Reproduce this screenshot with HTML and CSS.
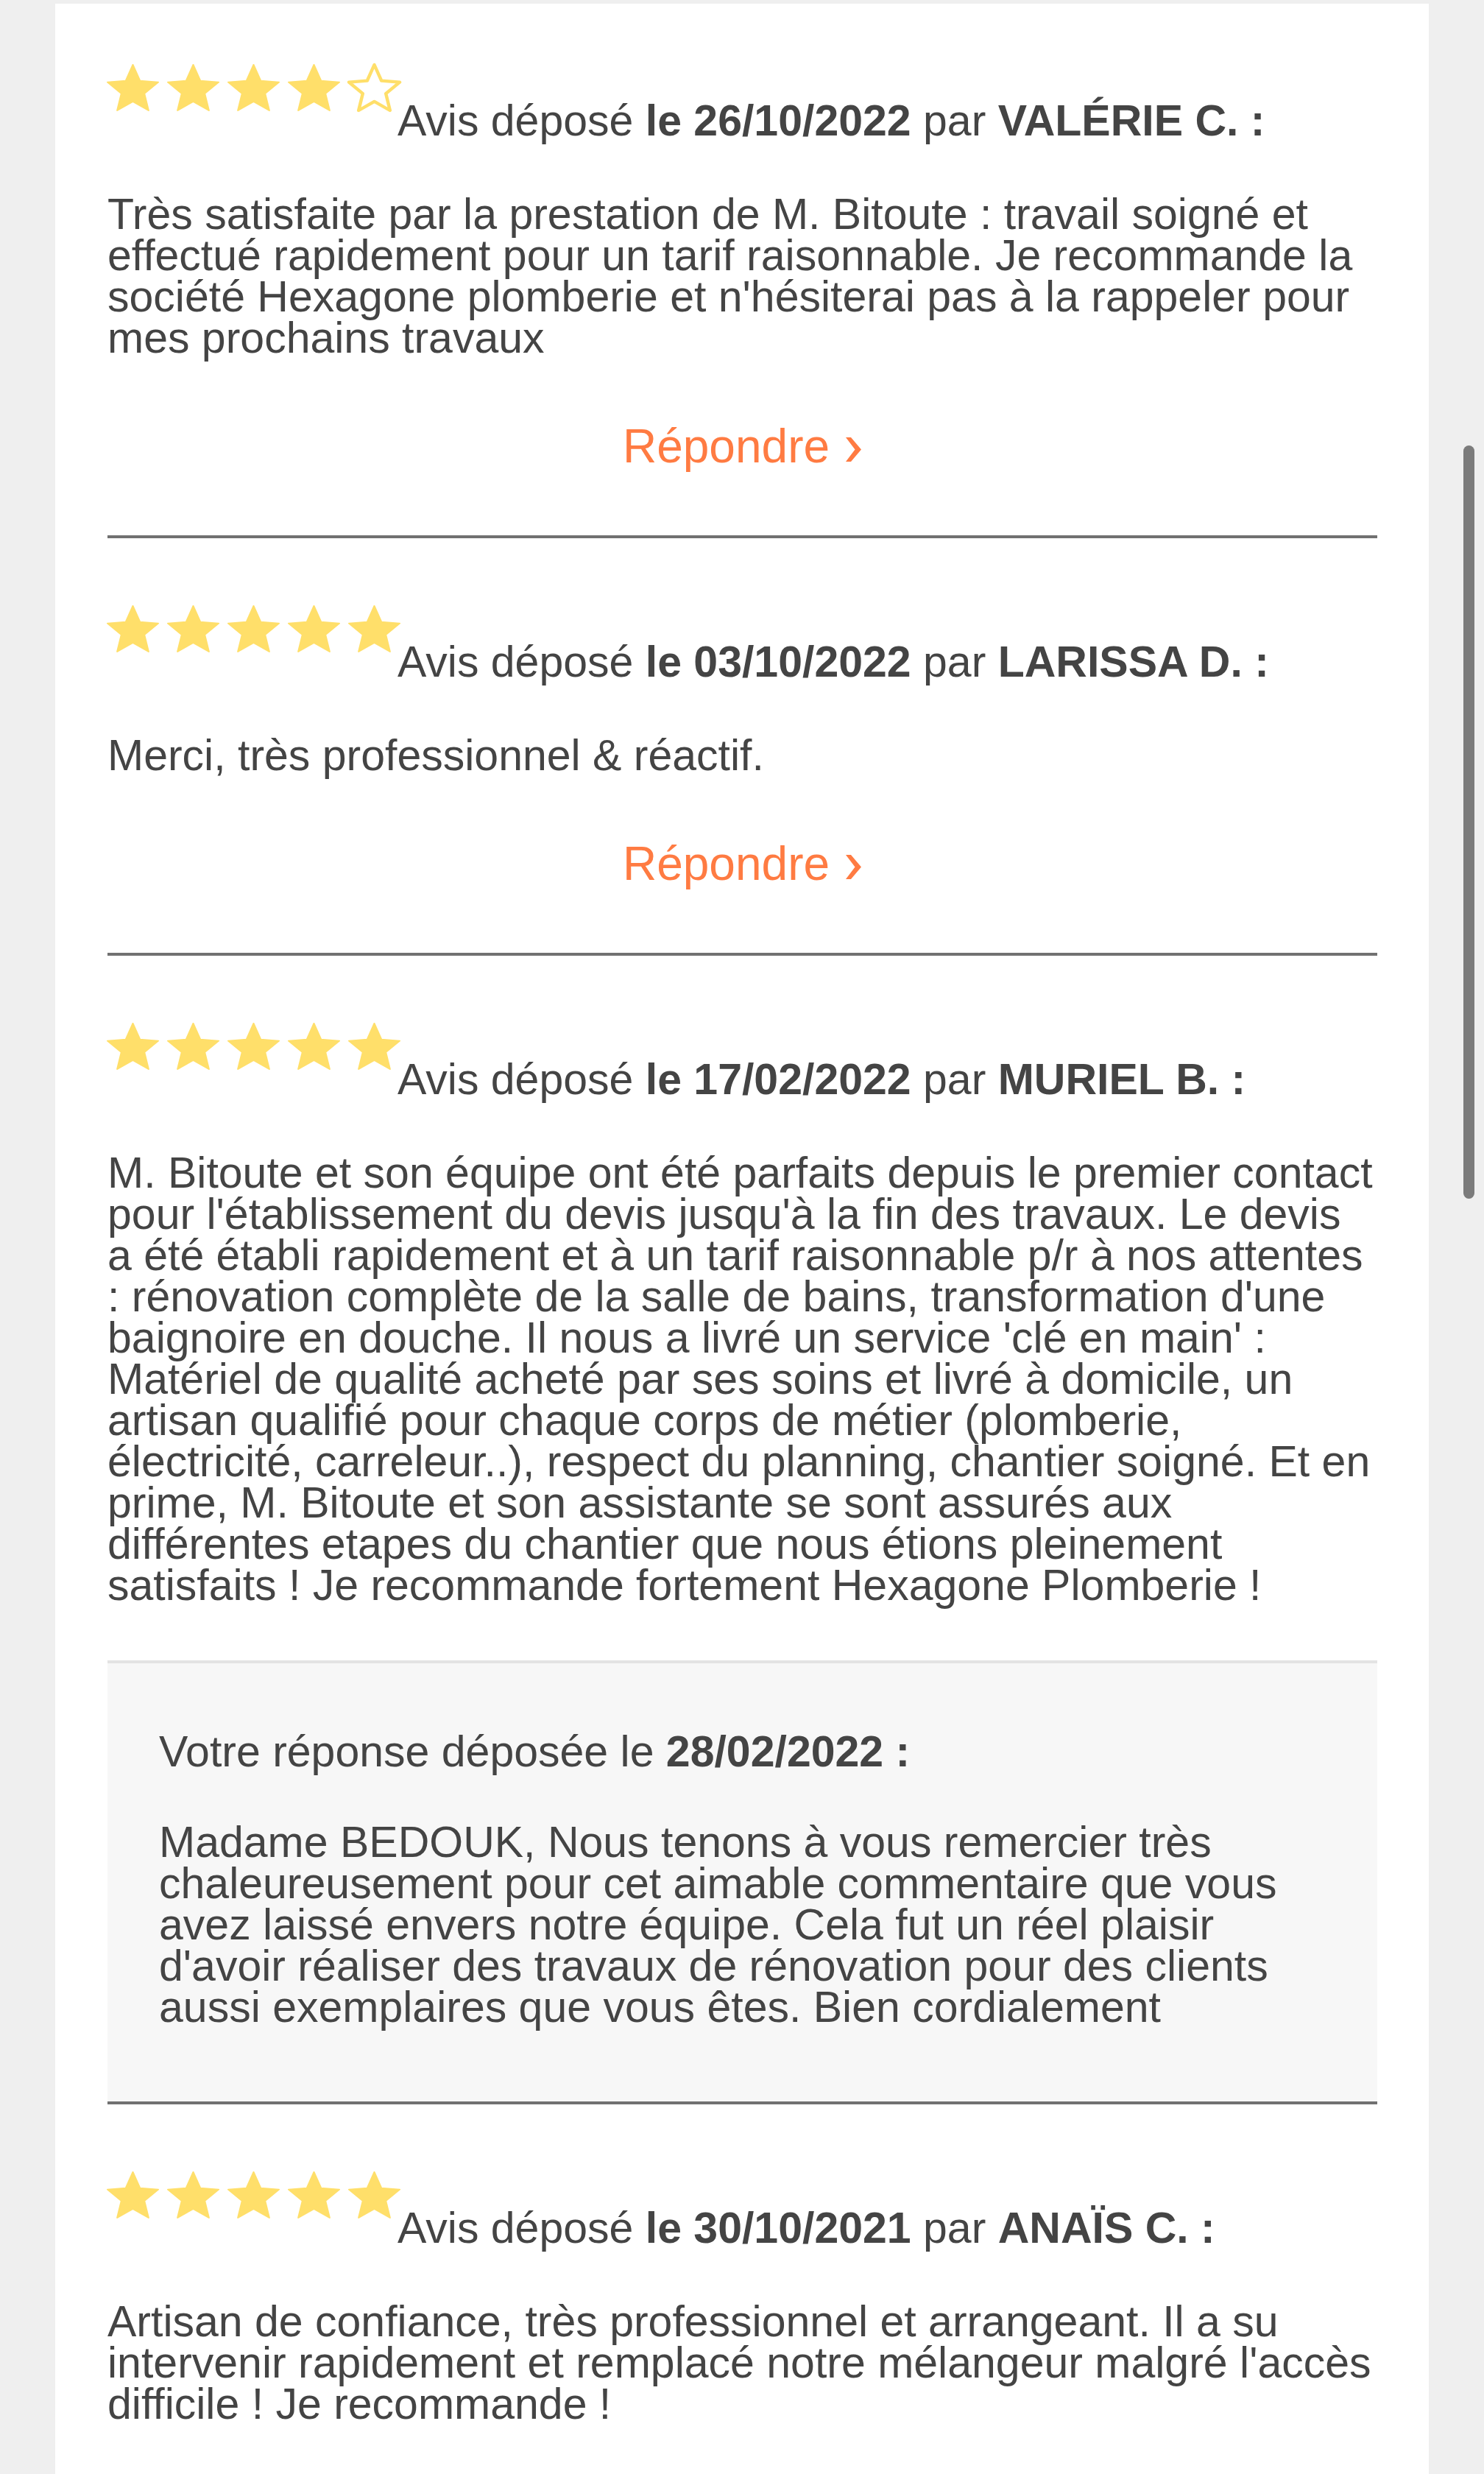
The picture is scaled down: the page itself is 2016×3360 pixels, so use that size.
FILE: index.html
```html
<!DOCTYPE html>
<html lang="fr">
<head>
<meta charset="utf-8">
<title>Avis clients – Hexagone Plomberie</title>
<link rel="stylesheet" href="styles.css">
</head>
<body>
<main class="page">

  <article class="review">
    <header class="review-head">
      <span class="stars">
        <svg class="star" viewBox="2 2 20 19" preserveAspectRatio="none"><path d="M12 17.27L18.18 21l-1.64-7.03L22 9.24l-7.19-.61L12 2 9.19 8.63 2 9.24l5.46 4.73L5.82 21z"/></svg>
        <svg class="star" viewBox="2 2 20 19" preserveAspectRatio="none"><path d="M12 17.27L18.18 21l-1.64-7.03L22 9.24l-7.19-.61L12 2 9.19 8.63 2 9.24l5.46 4.73L5.82 21z"/></svg>
        <svg class="star" viewBox="2 2 20 19" preserveAspectRatio="none"><path d="M12 17.27L18.18 21l-1.64-7.03L22 9.24l-7.19-.61L12 2 9.19 8.63 2 9.24l5.46 4.73L5.82 21z"/></svg>
        <svg class="star" viewBox="2 2 20 19" preserveAspectRatio="none"><path d="M12 17.27L18.18 21l-1.64-7.03L22 9.24l-7.19-.61L12 2 9.19 8.63 2 9.24l5.46 4.73L5.82 21z"/></svg>
        <svg class="star star-empty" viewBox="2 2 20 19" preserveAspectRatio="none"><path d="M12 17.27L18.18 21l-1.64-7.03L22 9.24l-7.19-.61L12 2 9.19 8.63 2 9.24l5.46 4.73L5.82 21z"/></svg>
      </span>
      <p class="meta">Avis déposé <b>le 26/10/2022</b> par <b>VALÉRIE C. :</b></p>
    </header>
    <p class="review-text">Très satisfaite par la prestation de M. Bitoute : travail soigné et effectué rapidement pour un tarif raisonnable. Je recommande la société Hexagone plomberie et n'hésiterai pas à la rappeler pour mes prochains travaux</p>
    <div class="reply-row"><a class="reply" href="#">Répondre<svg class="chev" viewBox="0 0 23 35"><polygon points="1,1 8,1 22,17.5 8,34 1,34 13.5,17.5"/></svg></a></div>
  </article>

  <article class="review">
    <header class="review-head">
      <span class="stars">
        <svg class="star" viewBox="2 2 20 19" preserveAspectRatio="none"><path d="M12 17.27L18.18 21l-1.64-7.03L22 9.24l-7.19-.61L12 2 9.19 8.63 2 9.24l5.46 4.73L5.82 21z"/></svg>
        <svg class="star" viewBox="2 2 20 19" preserveAspectRatio="none"><path d="M12 17.27L18.18 21l-1.64-7.03L22 9.24l-7.19-.61L12 2 9.19 8.63 2 9.24l5.46 4.73L5.82 21z"/></svg>
        <svg class="star" viewBox="2 2 20 19" preserveAspectRatio="none"><path d="M12 17.27L18.18 21l-1.64-7.03L22 9.24l-7.19-.61L12 2 9.19 8.63 2 9.24l5.46 4.73L5.82 21z"/></svg>
        <svg class="star" viewBox="2 2 20 19" preserveAspectRatio="none"><path d="M12 17.27L18.18 21l-1.64-7.03L22 9.24l-7.19-.61L12 2 9.19 8.63 2 9.24l5.46 4.73L5.82 21z"/></svg>
        <svg class="star" viewBox="2 2 20 19" preserveAspectRatio="none"><path d="M12 17.27L18.18 21l-1.64-7.03L22 9.24l-7.19-.61L12 2 9.19 8.63 2 9.24l5.46 4.73L5.82 21z"/></svg>
      </span>
      <p class="meta">Avis déposé <b>le 03/10/2022</b> par <b>LARISSA D. :</b></p>
    </header>
    <p class="review-text">Merci, très professionnel &amp; réactif.</p>
    <div class="reply-row"><a class="reply" href="#">Répondre<svg class="chev" viewBox="0 0 23 35"><polygon points="1,1 8,1 22,17.5 8,34 1,34 13.5,17.5"/></svg></a></div>
  </article>

  <article class="review review-answered">
    <header class="review-head">
      <span class="stars">
        <svg class="star" viewBox="2 2 20 19" preserveAspectRatio="none"><path d="M12 17.27L18.18 21l-1.64-7.03L22 9.24l-7.19-.61L12 2 9.19 8.63 2 9.24l5.46 4.73L5.82 21z"/></svg>
        <svg class="star" viewBox="2 2 20 19" preserveAspectRatio="none"><path d="M12 17.27L18.18 21l-1.64-7.03L22 9.24l-7.19-.61L12 2 9.19 8.63 2 9.24l5.46 4.73L5.82 21z"/></svg>
        <svg class="star" viewBox="2 2 20 19" preserveAspectRatio="none"><path d="M12 17.27L18.18 21l-1.64-7.03L22 9.24l-7.19-.61L12 2 9.19 8.63 2 9.24l5.46 4.73L5.82 21z"/></svg>
        <svg class="star" viewBox="2 2 20 19" preserveAspectRatio="none"><path d="M12 17.27L18.18 21l-1.64-7.03L22 9.24l-7.19-.61L12 2 9.19 8.63 2 9.24l5.46 4.73L5.82 21z"/></svg>
        <svg class="star" viewBox="2 2 20 19" preserveAspectRatio="none"><path d="M12 17.27L18.18 21l-1.64-7.03L22 9.24l-7.19-.61L12 2 9.19 8.63 2 9.24l5.46 4.73L5.82 21z"/></svg>
      </span>
      <p class="meta">Avis déposé <b>le 17/02/2022</b> par <b>MURIEL B. :</b></p>
    </header>
    <p class="review-text">M. Bitoute et son équipe ont été parfaits depuis le premier contact pour l'établissement du devis jusqu'à la fin des travaux. Le devis a été établi rapidement et à un tarif raisonnable p/r à nos attentes : rénovation complète de la salle de bains, transformation d'une baignoire en douche. Il nous a livré un service 'clé en main' : Matériel de qualité acheté par ses soins et livré à domicile, un artisan qualifié pour chaque corps de métier (plomberie, électricité, carreleur..), respect du planning, chantier soigné. Et en prime, M. Bitoute et son assistante se sont assurés aux différentes etapes du chantier que nous étions pleinement satisfaits ! Je recommande fortement Hexagone Plomberie !</p>
    <section class="response">
      <p class="response-head">Votre réponse déposée le <b>28/02/2022 :</b></p>
      <p class="response-text">Madame BEDOUK, Nous tenons à vous remercier très chaleureusement pour cet aimable commentaire que vous avez laissé envers notre équipe. Cela fut un réel plaisir d'avoir réaliser des travaux de rénovation pour des clients aussi exemplaires que vous êtes. Bien cordialement</p>
    </section>
  </article>

  <article class="review review-last">
    <header class="review-head">
      <span class="stars">
        <svg class="star" viewBox="2 2 20 19" preserveAspectRatio="none"><path d="M12 17.27L18.18 21l-1.64-7.03L22 9.24l-7.19-.61L12 2 9.19 8.63 2 9.24l5.46 4.73L5.82 21z"/></svg>
        <svg class="star" viewBox="2 2 20 19" preserveAspectRatio="none"><path d="M12 17.27L18.18 21l-1.64-7.03L22 9.24l-7.19-.61L12 2 9.19 8.63 2 9.24l5.46 4.73L5.82 21z"/></svg>
        <svg class="star" viewBox="2 2 20 19" preserveAspectRatio="none"><path d="M12 17.27L18.18 21l-1.64-7.03L22 9.24l-7.19-.61L12 2 9.19 8.63 2 9.24l5.46 4.73L5.82 21z"/></svg>
        <svg class="star" viewBox="2 2 20 19" preserveAspectRatio="none"><path d="M12 17.27L18.18 21l-1.64-7.03L22 9.24l-7.19-.61L12 2 9.19 8.63 2 9.24l5.46 4.73L5.82 21z"/></svg>
        <svg class="star" viewBox="2 2 20 19" preserveAspectRatio="none"><path d="M12 17.27L18.18 21l-1.64-7.03L22 9.24l-7.19-.61L12 2 9.19 8.63 2 9.24l5.46 4.73L5.82 21z"/></svg>
      </span>
      <p class="meta">Avis déposé <b>le 30/10/2021</b> par <b>ANAÏS C. :</b></p>
    </header>
    <p class="review-text">Artisan de confiance, très professionnel et arrangeant. Il a su intervenir rapidement et remplacé notre mélangeur malgré l'accès difficile ! Je recommande !</p>
  </article>

</main>
<div class="scrollbar" aria-hidden="true"></div>
</body>
</html>
```

FILE: styles.css
```css
html {
  overflow: hidden;
}

body {
  margin: 0;
  background: #efefef;
  font-family: "Liberation Sans", Arial, Helvetica, sans-serif;
  color: #444444;
}

.page {
  margin: 5px 75px 0 75px;
  background: #ffffff;
  padding: 0 70px 0 71px;
  min-height: 3355px;
  box-sizing: border-box;
}

.review {
  padding: 92px 0 89px;
  border-bottom: 4px solid #717171;
}

.review:first-child {
  padding-top: 83px;
}

.review-answered {
  padding-bottom: 0;
}

.review-last {
  border-bottom: 0;
}

.review-head {
  display: flex;
  align-items: flex-start;
}

.stars {
  display: flex;
  gap: 13px;
  height: 62px;
  flex: none;
}

.star {
  display: block;
  width: 69px;
  height: 62px;
  fill: #ffdf6a;
  stroke: #ffdf6a;
  stroke-width: 0.6;
  stroke-linejoin: round;
  overflow: visible;
}

.star-empty {
  fill: #ffffff;
  stroke-width: 1.3;
}

.meta {
  margin: 0 0 0 -3px;
  padding-top: 48px;
  font-size: 59px;
  line-height: 56px;
  white-space: nowrap;
}

.meta b,
.response-head b {
  font-weight: 700;
}

.review-text {
  margin: 71px 5px 0 0;
  font-size: 59px;
  line-height: 56px;
}

.reply-row {
  margin-top: 87px;
  text-align: center;
  font-size: 64px;
  line-height: 64px;
}

.reply {
  color: #ff7b42;
  text-decoration: none;
}

.chev {
  width: 23px;
  height: 35px;
  margin-left: 21px;
  fill: #ff7b42;
  vertical-align: baseline;
}

.response {
  margin-top: 74px;
  border-top: 4px solid #e3e3e3;
  background: #f7f7f7;
  padding: 92px 70px 100px 70px;
}

.response-head {
  margin: 0;
  font-size: 59px;
  line-height: 56px;
}

.response-text {
  margin: 67px 0 0;
  font-size: 59px;
  line-height: 56px;
}

.scrollbar {
  position: fixed;
  left: 1988px;
  top: 605px;
  width: 15px;
  height: 1023px;
  border-radius: 8px;
  background: #7b7b7b;
}
```
